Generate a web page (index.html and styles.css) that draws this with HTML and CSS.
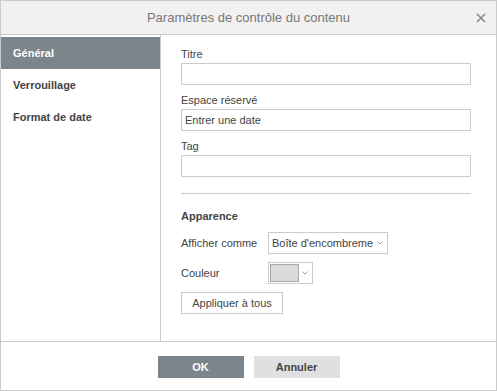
FILE: index.html
```html
<!DOCTYPE html>
<html>
  <head>
    <meta charset="utf-8" />
    <title>Paramètres de contrôle du contenu</title>
    <link rel="stylesheet" href="styles.css">
  </head>
  <body>
    <div class="dialog">
      <div class="header">
        <span class="title">Paramètres de contrôle du contenu</span>
        <svg class="close-icon" viewBox="0 0 10 10">
          <path d="M1 1L9 9M9 1L1 9" />
        </svg>
      </div>
      <div class="main">
        <div class="sidebar">
          <div class="menu-item menu-item-active">Général</div>
          <div class="menu-item">Verrouillage</div>
          <div class="menu-item">Format de date</div>
        </div>
        <div class="content">
          <div class="field">
            <label class="field-label">Titre</label>
            <input type="text" class="text-input" />
          </div>
          <div class="field">
            <label class="field-label">Espace réservé</label>
            <input type="text" class="text-input" value="Entrer une date" />
          </div>
          <div class="field">
            <label class="field-label">Tag</label>
            <input type="text" class="text-input" />
          </div>
          <div class="separator"></div>
          <div class="section-title">Apparence</div>
          <div class="row">
            <span class="row-label">Afficher comme</span>
            <div class="select">
              <span class="select-text">Boîte d'encombreme</span>
              <svg class="arrow-icon" viewBox="0 0 6 4">
                <path d="M0.5 0.5L3 3L5.5 0.5" />
              </svg>
            </div>
          </div>
          <div class="row">
            <span class="row-label">Couleur</span>
            <div class="color-picker">
              <span class="swatch"></span>
              <svg class="arrow-icon" viewBox="0 0 6 4">
                <path d="M0.5 0.5L3 3L5.5 0.5" />
              </svg>
            </div>
          </div>
          <button class="button">Appliquer à tous</button>
        </div>
      </div>
      <div class="footer">
        <button class="button-footer button-primary">OK</button>
        <button class="button-footer">Annuler</button>
      </div>
    </div>
  </body>
</html>
```

FILE: styles.css
```css
* {
  margin: 0;
  padding: 0;
  box-sizing: border-box;
}
body {
  font-family: "Liberation Sans", Arial, sans-serif;
  font-size: 11px;
  color: #444;
  background: white;
}
.dialog {
  width: 497px;
  height: 391px;
  border: 1px solid #cbcbcb;
  display: flex;
  flex-direction: column;
}
.header {
  height: 34px;
  background: #f1f1f1;
  border-bottom: 1px solid #cbcbcb;
  display: flex;
  align-items: center;
  justify-content: center;
  position: relative;
}
.title {
  font-size: 13px;
  color: #777;
}
.close-icon {
  position: absolute;
  right: 10px;
  top: 12px;
  width: 10px;
  height: 10px;
  stroke: #888;
  stroke-width: 1.6;
  fill: none;
}
.main {
  height: 307px;
  display: flex;
  border-bottom: 1px solid #cbcbcb;
}
.sidebar {
  width: 160px;
  border-right: 1px solid #cbcbcb;
  padding-top: 2px;
}
.menu-item {
  height: 32px;
  line-height: 32px;
  padding-left: 12px;
  font-weight: bold;
  color: #444;
}
.menu-item-active {
  background: #7d858c;
  color: white;
}
.content {
  flex: 1;
  padding: 12px 0 0 20px;
}
.field {
  margin-bottom: 8px;
}
.field-label {
  display: block;
  height: 16px;
  line-height: 14px;
}
.text-input {
  display: block;
  width: 290px;
  height: 22px;
  border: 1px solid #cbcbcb;
  border-radius: 1px;
  padding: 0 3px;
  font-family: inherit;
  font-size: 11px;
  color: #444;
}
.separator {
  width: 290px;
  border-top: 1px solid #cbcbcb;
  margin-top: 16px;
}
.section-title {
  font-weight: bold;
  line-height: 14px;
  margin: 15px 0 9px;
}
.row {
  display: flex;
  align-items: center;
  height: 22px;
  margin-bottom: 8px;
}
.row-label {
  width: 87px;
}
.select {
  width: 120px;
  height: 22px;
  border: 1px solid #cbcbcb;
  display: flex;
  align-items: center;
  padding-left: 3px;
  overflow: hidden;
}
.select-text {
  flex: 1;
  white-space: nowrap;
  overflow: hidden;
}
.arrow-icon {
  width: 6px;
  height: 4px;
  margin: 0 4px 0 2px;
  stroke: #888;
  stroke-width: 0.8;
  fill: none;
  flex-shrink: 0;
}
.color-picker {
  width: 45px;
  height: 22px;
  border: 1px solid #cbcbcb;
  display: flex;
  align-items: center;
  padding-left: 1px;
}
.swatch {
  width: 32px;
  height: 18px;
  background: #dadada;
  border: 1px solid #a8a8a8;
  margin-right: 1px;
}
.button {
  width: 102px;
  height: 22px;
  border: 1px solid #cbcbcb;
  background: white;
  font-family: inherit;
  font-size: 11px;
  color: #444;
}
.footer {
  flex: 1;
  display: flex;
  justify-content: center;
  gap: 10px;
  padding-top: 14px;
}
.button-footer {
  width: 86px;
  height: 22px;
  border: none;
  background: #dfe0e1;
  font-family: inherit;
  font-size: 11px;
  font-weight: bold;
  color: #444;
}
.button-primary {
  background: #7d858c;
  color: white;
}
```
